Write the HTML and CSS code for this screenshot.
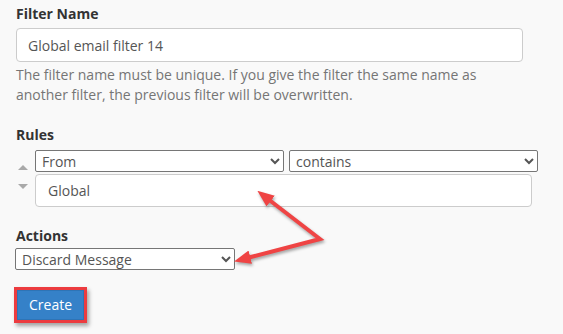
FILE: index.html
```html
<!DOCTYPE html>
<html>
<head>
<meta charset="utf-8">
<link rel="stylesheet" href="styles.css">
</head>
<body>
<div class="page">
  <label class="label first">Filter Name</label>
  <input class="text-input name-input" type="text" value="Global email filter 14">
  <p class="help">The filter name must be unique. If you give the filter the same name as another filter, the previous filter will be overwritten.</p>

  <label class="label section">Rules</label>
  <div class="rule">
    <div class="spinner">
      <span class="tri up"></span>
      <span class="tri down"></span>
    </div>
    <div class="rule-body">
      <div class="rule-selects">
        <select class="sel"><option>From</option></select>
        <select class="sel"><option>contains</option></select>
      </div>
      <input class="text-input value-input" type="text" value="Global">
    </div>
  </div>

  <label class="label section actions-label">Actions</label>
  <select class="sel action-sel"><option>Discard Message</option></select>

  <div class="actions-row">
    <span class="highlight"><button class="btn-create">Create</button></span>
  </div>

  <svg class="annot" width="563" height="334" viewBox="0 0 563 334">
    <defs>
      <marker id="ah" viewBox="0 0 10 10" refX="2" refY="5" markerWidth="4.2" markerHeight="3.4" orient="auto-start-reverse" markerUnits="strokeWidth" preserveAspectRatio="none">
        <path d="M0,0 L10,5 L0,10 z" fill="#ef4444"/>
      </marker>
    </defs>
    <polyline points="268,199 320,239 247,258" fill="none" stroke="#ef4444" stroke-width="4" stroke-linejoin="miter" marker-start="url(#ah)" marker-end="url(#ah)"/>
  </svg>
</div>
</body>
</html>
```

FILE: styles.css
```css
html, body {
  margin: 0;
  padding: 0;
  background: #f9f9f9;
}
.page {
  position: relative;
  width: 563px;
  height: 334px;
  overflow: hidden;
  box-sizing: border-box;
  padding: 4px 0 0 16px;
  font-family: "Open Sans", "Liberation Sans", sans-serif;
  font-size: 14px;
  line-height: 20px;
  color: #333;
  display: flex;
  flex-direction: column;
  align-items: flex-start;
}
.label {
  display: block;
  font-weight: 700;
  color: #333;
}
.label.section {
  margin-top: 20px;
}
.label.actions-label {
  margin-top: 19px;
}
.text-input {
  box-sizing: border-box;
  font-family: inherit;
  font-size: 14px;
  color: #555;
  background: #fff;
  border: 1px solid #ccc;
  border-radius: 4px;
  outline: none;
  margin: 0;
}
.name-input {
  width: 507px;
  height: 34px;
  margin-top: 4px;
  padding: 0 11px;
}
.help {
  margin: 3px 0 0;
  width: 500px;
  color: #757575;
}
.rule {
  display: flex;
  margin-top: 5px;
}
.spinner {
  width: 19px;
  display: flex;
  flex-direction: column;
  align-items: flex-start;
  padding-top: 15px;
  box-sizing: border-box;
}
.tri {
  display: block;
  width: 0;
  height: 0;
  margin-left: 2px;
  border-left: 5px solid transparent;
  border-right: 5px solid transparent;
}
.tri.up {
  border-bottom: 5px solid #a9a9a9;
}
.tri.down {
  margin-top: 14px;
  border-top: 5px solid #a9a9a9;
}
.rule-body {
  display: flex;
  flex-direction: column;
}
.rule-selects {
  display: flex;
  gap: 5px;
}
.sel {
  box-sizing: border-box;
  height: 22px;
  width: 249px;
  font-family: inherit;
  font-size: 14px;
  color: #555;
  background-color: #fff;
  border: 1px solid #767676;
  border-radius: 2px;
  padding: 0 2px;
  margin: 0;
}
.value-input {
  width: 497px;
  height: 33px;
  margin-top: 2px;
  padding: 0 12px;
}
.action-sel {
  width: 220px;
  margin-top: 2px;
  margin-left: -1px;
}
.actions-row {
  margin-top: 17px;
  margin-left: -2px;
}
.highlight {
  display: inline-block;
  border: 3px solid #ec3b3f;
  box-shadow: 2px 3px 4px rgba(0, 0, 0, 0.35);
}
.btn-create {
  display: block;
  font-family: inherit;
  font-size: 14px;
  line-height: 20px;
  color: #fff;
  background: #3581c8;
  border: 1px solid #2e74b6;
  padding: 4px 11px;
  margin: 0;
  border-radius: 0;
}
.annot {
  position: absolute;
  left: 0;
  top: 0;
  pointer-events: none;
  filter: drop-shadow(1px 2px 1.5px rgba(0, 0, 0, 0.35));
}
```
